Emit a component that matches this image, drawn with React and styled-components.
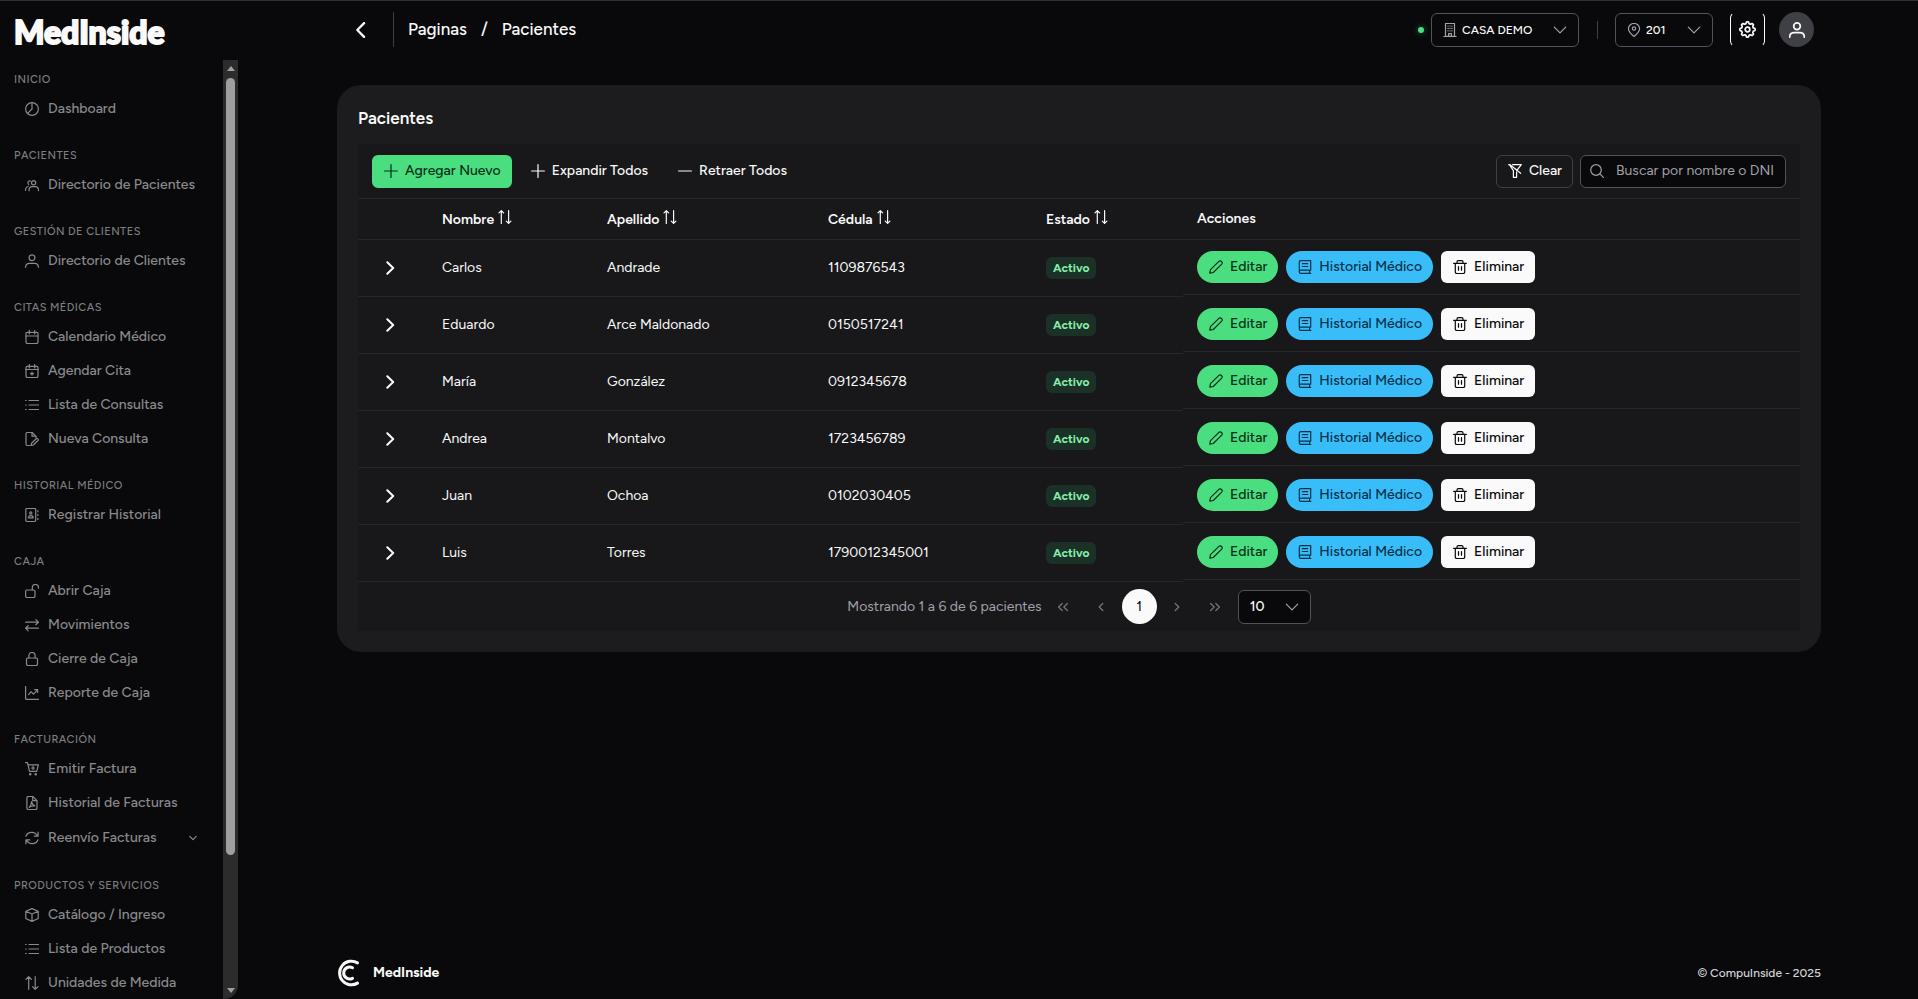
import { useState } from 'react';
import styled, { createGlobalStyle } from 'styled-components';

const GlobalStyle = createGlobalStyle`
  * {
    box-sizing: border-box;
  }
  body {
    margin: 0;
    background: #09090b;
    color: #fafafa;
    font-family: Figtree, Lato, 'Open Sans', sans-serif;
    font-size: 14px;
    line-height: 20px;
  }
  button, input, select {
    font: inherit;
    color: inherit;
  }
  a {
    color: inherit;
    text-decoration: none;
  }
`;

/* ---------- icons ---------- */

const Svg = styled.svg`
  flex: none;
  display: block;
  fill: none;
  stroke: currentColor;
  stroke-width: ${(p) => p.$weight || 1.2};
  stroke-linecap: round;
  stroke-linejoin: round;
`;

// eight rounded teeth around the centre
const gearPoints = Array.from({ length: 96 }, (_, i) => {
  const angle = (i / 96) * Math.PI * 2;
  const r = 5.6 + 0.7 * Math.tanh(2.5 * Math.cos(8 * angle));
  return `${(7 + r * Math.cos(angle)).toFixed(2)},${(7 + r * Math.sin(angle)).toFixed(2)}`;
}).join(' ');

const icons = {
  pie: <><circle cx='7' cy='7' r='6.4' /><path d='M7 .8V7L2.6 11.4' /></>,
  users: (
    <>
      <circle cx='8.6' cy='4.8' r='2.1' />
      <path d='M4 12.700c0-3 1.200-4 3-4h3.400c1.900 0 3.100 1 3.100 4' />
      <path d='M5.600 3.200C4.400 2.400 2.900 3.200 2.900 4.800c0 .8.400 1.400.9 1.800M.5 12.300c0-2.400.6-3.600 2.600-3.800' />
    </>
  ),
  user: <><circle cx='7' cy='3.700' r='2.900' /><path d='M.6 13.300c0-2.600 1.600-4 3.800-4h5.200c2.200 0 3.800 1.400 3.800 4' /></>,
  calendar: <><rect x='1' y='2.300' width='12' height='11.200' rx='1.400' /><path d='M1 6h12M4.300.5v3.400M9.700.5v3.400' /></>,
  calendarPlus: <><rect x='1' y='2.300' width='12' height='11.200' rx='1.400' /><path d='M1 5.500h12M4.300.5v3.400M9.700.5v3.400M7 8v3.200M5.400 9.600h3.200' /></>,
  list: <path d='M4 2.500h9.600M4 7h9.600M4 11.500h9.600M.6 2.500h.6M.6 7h.6M.6 11.500h.6' />,
  fileEdit: (
    <>
      <path d='M5 13.500H2.500c-1 0-1.500-.6-1.500-1.500V2C1 1.100 1.600.5 2.500.5h4.700L11 4.300v1.200' />
      <path d='M7 .6v3.600h3.800M6.600 11.200l4.600-4.500c1.100-.9 2.700.7 1.800 1.800l-4.600 4.500-2.300.5z' />
    </>
  ),
  addressBook: (
    <>
      <rect x='.8' y='.5' width='9.900' height='13' rx='1.200' />
      <circle cx='5.800' cy='5' r='1.100' />
      <path d='M3.400 9.800c0-1.600 1-2.200 2.400-2.200s2.400.6 2.400 2.200zM12.900 2.500v1.200M12.900 6.400v1.200M12.900 10.300v1.200' />
    </>
  ),
  lockOpen: <><rect x='.6' y='6' width='9.400' height='7.500' rx='1.400' /><path d='M7.300 6V3.400C7.300 1.600 8.600.5 10.400.5s3.100 1.100 3.100 2.900v.8' /></>,
  lock: <><rect x='1.500' y='6' width='11' height='7.500' rx='1.400' /><path d='M3.900 6V3.600C3.900 1.700 5.200.5 7 .5s3.100 1.200 3.100 3.100V6' /></>,
  transfer: <path d='M.6 4.200h12.800M10.800 1.600l2.600 2.600-2.600 2.500M13.400 10.200H.6M3.200 7.700L.6 10.200l2.600 2.600' />,
  chartLine: <path d='M.6.5v12c0 .6.300.9.900.9h12M3.600 8.600l2.500-3 2.400 2.500 4-4.300M9.600 3.600h3v3' />,
  cartPlus: (
    <>
      <path d='M.5.700h2l2 8.600h7.200l1.700-6.400H3.200M8 4.400v3.200M6.400 6h3.200' />
      <circle cx='5.200' cy='12.300' r='.7' />
      <circle cx='10.700' cy='12.300' r='.7' />
    </>
  ),
  filePdf: (
    <>
      <path d='M3.200.5h4.600L12 4.600v7.500c0 .9-.5 1.400-1.400 1.400H3.200c-.8 0-1.300-.5-1.300-1.400V1.900C1.900 1 2.400.5 3.200.5z' />
      <path d='M7.700.7v4h4M6.600 5.600c.6 2.600 1 3.500 3.200 4.300-2.300-.3-4 .1-5.600 1.500 1.700-1.400 2.200-3.200 2.400-5.800z' />
    </>
  ),
  sync: <path d='M1 5.200C1.900 2.700 4.200 1.400 6.800 1.400c2.700 0 4.500 1.300 5.800 3.500M13.100 1.200v3.900H9.300M13 8.800c-.9 2.500-3.200 3.800-5.800 3.800-2.700 0-4.500-1.300-5.800-3.500M.9 12.800V8.900h3.800' />,
  box: <path d='M7 .6l6.200 2.600v7.300L7 13.400.8 10.500V3.200zM.9 3.300L7 6l6.100-2.700M7 6v7.300' />,
  sort: <path d='M3.700 13.300V.7M.9 3.400L3.700.7l2.700 2.700M10.200.7v12.600M7.500 10.600l2.700 2.700 2.800-2.700' />,
  sortSmall: <path d='M3.300 13.400V.6M1 2.900L3.300.6l2.300 2.300M10.600.6v12.800M8.300 11.100l2.300 2.300 2.300-2.300' />,
  chevronDown: <path d='M1.300 4.200L7 9.900l5.700-5.700' />,
  chevronRight: <path d='M4.300 1.200L10.200 7l-5.900 5.800' />,
  chevronLeft: <path d='M9.700 1L3.800 7l5.900 6' />,
  angleRight: <path d='M5.200 3.500L8.800 7l-3.600 3.500' />,
  angleLeft: <path d='M8.800 3.500L5.200 7l3.600 3.500' />,
  anglesRight: <path d='M2.600 3.500L6.200 7l-3.600 3.500M7.800 3.500L11.400 7l-3.600 3.500' />,
  anglesLeft: <path d='M6.200 3.500L2.600 7l3.600 3.500M11.400 3.500L7.800 7l3.600 3.500' />,
  plus: <path d='M7 .6v12.800M.6 7h12.800' />,
  minus: <path d='M.6 7h12.800' />,
  building: <path d='M2.500.5h9v12.900h-9zM.9 13.500h12.200M4.900 3h.3M8.800 3h.3M6.900 3h.2M4.900 5.400h.3M8.800 5.400h.3M6.900 5.400h.2M4.900 7.800h.3M8.800 7.800h.3M6.900 7.800h.2M5.600 13.400v-2.700h2.800v2.700' />,
  marker: <><path d='M7 13.500C4.300 11.300 1.400 8.700 1.400 5.800 1.400 2.800 3.900.5 7 .5s5.600 2.300 5.600 5.300c0 2.900-2.900 5.500-5.600 7.700z' /><circle cx='7' cy='5.500' r='1.700' /></>,
  cog: <><polygon points={gearPoints} /><circle cx='7' cy='7' r='1.900' /></>,
  filterSlash: <path d='M4.600.7h8.700L8.700 6.600M1.400.7l4 5.900v6.700h3.200V8M.7.7h1.400l10.500 8.600' />,
  search: <><circle cx='6' cy='6' r='5.300' /><path d='M9.900 9.900l3.500 3.500' /></>,
  pencil: <path d='M.8 13.200l.7-3.500 8.400-8.400c1.800-1.500 4.300 1 2.800 2.800l-8.400 8.400z' />,
  book: <path d='M12.700 10.200H2.800c-2 0-2 3.200 0 3.200h9.900M2.800 10.200c-.9 0-1.500.6-1.500 1.500V2C1.300 1.100 1.900.6 2.800.6h9.900v9.600M11.600 10.200v3.200M4.300 3.700h5.400M4.300 6.500h5.400' />,
  trash: <path d='M.6 3.300h12.800M4 3.200V1.900C4 1.100 4.500.6 5.300.6h3.400c.8 0 1.300.5 1.300 1.300v1.300M2.300 3.400v8.700c0 .8.600 1.400 1.400 1.400h6.600c.8 0 1.400-.6 1.400-1.400V3.400M5.500 6.600v3.600M8.500 6.600v3.600' />,
};

const Icon = ({ name, size = 14, weight }) => (
  <Svg width={size} height={size} viewBox='0 0 14 14' $weight={weight} aria-hidden='true'>
    {icons[name]}
  </Svg>
);

/* ---------- sidebar ---------- */

const Layout = styled.div`
  display: flex;
  min-height: 100vh;
  border-top: 1px solid #303033;
`;

const Sidebar = styled.aside`
  flex: none;
  position: sticky;
  top: 0;
  width: 238px;
  height: calc(100vh - 1px);
  display: flex;
  flex-direction: column;
`;

const Logo = styled.a`
  flex: none;
  height: 59px;
  padding: 10px 14px 0;
  font-family: Lato, sans-serif;
  font-size: 32px;
  font-weight: 900;
  line-height: 42px;
  -webkit-text-stroke: 2px currentColor;
`;

const SidebarBody = styled.div`
  flex: 1;
  min-height: 0;
  display: flex;
  border-bottom-right-radius: 14px;
  overflow: hidden;
`;

const Nav = styled.nav`
  flex: 1;
  overflow: hidden;
  padding: 10px 26px 0 14px;
  color: #8a8a8d;
`;

const Section = styled.section`
  margin-bottom: 20px;
`;

const SectionTitle = styled.h2`
  margin: 0 0 2px;
  color: #7e7e81;
  font-size: 11px;
  font-weight: 500;
  line-height: 20px;
  letter-spacing: 0.04em;
  text-transform: uppercase;
`;

const NavItem = styled.a`
  display: flex;
  align-items: center;
  gap: 9px;
  height: ${(p) => (p.$expandable ? 36 : 34)}px;
  padding: 0 0 0 11px;
  font-weight: 500;

  span {
    flex: 1;
    white-space: nowrap;
  }
`;

const ScrollBar = styled.div`
  width: 15px;
  background: #2c2c2c;
  color: #9f9f9f;
  display: flex;
  flex-direction: column;
  align-items: center;
  padding: 6px 0;
`;

const Arrow = styled.i`
  flex: none;
  border: 4px solid transparent;
  border-top-width: ${(p) => (p.$down ? '5px' : 0)};
  border-bottom-width: ${(p) => (p.$down ? 0 : '5px')};
  border-top-color: ${(p) => (p.$down ? 'currentColor' : 'transparent')};
  border-bottom-color: ${(p) => (p.$down ? 'transparent' : 'currentColor')};
`;

const Track = styled.div`
  flex: 1;
  display: flex;
  flex-direction: column;
  padding: 7px 0;
`;

const Thumb = styled.div`
  width: 9px;
  height: 86%;
  border-radius: 5px;
  background: currentColor;
`;

const sections = [
  { title: 'Inicio', items: [['pie', 'Dashboard']] },
  { title: 'Pacientes', items: [['users', 'Directorio de Pacientes']] },
  { title: 'Gestión de Clientes', items: [['user', 'Directorio de Clientes']] },
  {
    title: 'Citas Médicas',
    items: [
      ['calendar', 'Calendario Médico'],
      ['calendarPlus', 'Agendar Cita'],
      ['list', 'Lista de Consultas'],
      ['fileEdit', 'Nueva Consulta'],
    ],
  },
  { title: 'Historial Médico', items: [['addressBook', 'Registrar Historial']] },
  {
    title: 'Caja',
    items: [
      ['lockOpen', 'Abrir Caja'],
      ['transfer', 'Movimientos'],
      ['lock', 'Cierre de Caja'],
      ['chartLine', 'Reporte de Caja'],
    ],
  },
  {
    title: 'Facturación',
    items: [
      ['cartPlus', 'Emitir Factura'],
      ['filePdf', 'Historial de Facturas'],
      ['sync', 'Reenvío Facturas', true],
    ],
  },
  {
    title: 'Productos y Servicios',
    items: [
      ['box', 'Catálogo / Ingreso'],
      ['list', 'Lista de Productos'],
      ['sort', 'Unidades de Medida'],
    ],
  },
];

const AppSidebar = () => (
  <Sidebar>
    <Logo href='#inicio'>MedInside</Logo>
    <SidebarBody>
      <Nav>
        {sections.map((section) => (
          <Section key={section.title}>
            <SectionTitle>{section.title}</SectionTitle>
            {section.items.map(([icon, label, expandable]) => (
              <NavItem key={label} href='#' $expandable={expandable}>
                <Icon name={icon} />
                <span>{label}</span>
                {expandable && <Icon name='chevronDown' size={8} weight={2} />}
              </NavItem>
            ))}
          </Section>
        ))}
      </Nav>
      <ScrollBar aria-hidden='true'>
        <Arrow />
        <Track>
          <Thumb />
        </Track>
        <Arrow $down />
      </ScrollBar>
    </SidebarBody>
  </Sidebar>
);

/* ---------- top bar ---------- */

const Main = styled.main`
  flex: 1;
  min-width: 0;
  display: flex;
  flex-direction: column;
  padding: 0 97px 12px 99px;
`;

const TopBar = styled.header`
  display: flex;
  align-items: center;
  height: 84px;
  padding: 11px 7px 38px 0;
`;

const BackButton = styled.button`
  display: flex;
  align-items: center;
  justify-content: center;
  width: 48px;
  height: 35px;
  padding: 0;
  border: 0;
  background: none;
`;

const Breadcrumb = styled.nav`
  display: flex;
  gap: 14px;
  align-items: center;
  height: 35px;
  margin-left: 8px;
  padding: 0 0 2px 14px;
  border-left: 1px solid #3f3f46;
  font-size: 17px;
  font-weight: 500;
`;

const TopTools = styled.div`
  display: flex;
  align-items: center;
  margin-left: auto;
`;

const StatusDot = styled.span`
  width: 6px;
  height: 6px;
  margin-right: 7px;
  border-radius: 50%;
  background: #4ade80;
  box-shadow: 0 0 6px rgba(74, 222, 128, 0.5);
`;

const SelectBox = styled.label`
  display: flex;
  align-items: center;
  gap: ${(p) => p.$gap || 0}px;
  width: ${(p) => p.$width}px;
  height: 34px;
  padding: 0 ${(p) => p.$pad || 11}px;
  border: 1px solid #52525b;
  border-radius: 6px;
  background: #09090b;
  color: #a1a1aa;

  select {
    flex: 1;
    min-width: 0;
    padding: 0;
    border: 0;
    outline: 0;
    appearance: none;
    background: transparent;
    color: #fafafa;
    font-size: ${(p) => p.$font || 12}px;
    font-weight: 500;
  }
`;

const Separator = styled.span`
  width: 1px;
  height: 18px;
  margin: 0 17px 0 18px;
  background: #3f3f46;
`;

const GearButton = styled.button`
  display: flex;
  align-items: center;
  justify-content: center;
  width: 35px;
  height: 35px;
  margin: 0 14px 0 17px;
  padding: 0;
  border: 1px solid transparent;
  border-left-color: #fff;
  border-right-color: #fff;
  border-radius: 6px;
  background: none;
`;

const Avatar = styled.button`
  display: flex;
  align-items: center;
  justify-content: center;
  width: 35px;
  height: 35px;
  padding: 0;
  border: 0;
  border-radius: 50%;
  background: #3f3f46;
`;

const Header = () => (
  <TopBar>
    <BackButton aria-label='Volver'>
      <Icon name='chevronLeft' size={16} weight={2} />
    </BackButton>
    <Breadcrumb aria-label='Ruta'>
      <a href='#paginas'>Paginas</a>
      <span>/</span>
      <a href='#pacientes'>Pacientes</a>
    </Breadcrumb>
    <TopTools>
      <StatusDot />
      <SelectBox $width={148} $gap={5}>
        <Icon name='building' />
        <select aria-label='Empresa'>
          <option>CASA DEMO</option>
        </select>
        <Icon name='chevronDown' />
      </SelectBox>
      <Separator />
      <SelectBox $width={98} $gap={5}>
        <Icon name='marker' />
        <select aria-label='Sucursal'>
          <option>201</option>
        </select>
        <Icon name='chevronDown' />
      </SelectBox>
      <GearButton aria-label='Configuración'>
        <Icon name='cog' size={17} weight={1.4} />
      </GearButton>
      <Avatar aria-label='Perfil'>
        <Icon name='user' size={16} weight={1.5} />
      </Avatar>
    </TopTools>
  </TopBar>
);

/* ---------- patients table ---------- */

const Card = styled.section`
  padding: 21px;
  border-radius: 24px;
  background: #1c1c1e;
`;

const CardTitle = styled.h1`
  margin: 0 0 14px;
  font-size: 17px;
  font-weight: 600;
  line-height: 24px;
`;

const Panel = styled.div`
  background: #18181b;
`;

const Toolbar = styled.div`
  display: flex;
  align-items: center;
  height: 55px;
  padding: 0 14px;
  border-bottom: 1px solid #27272a;
`;

const ToolbarEnd = styled.div`
  display: flex;
  gap: 7px;
  margin-left: auto;
`;

const tones = {
  green: 'background: #4ade80; color: #052e16;',
  blue: 'background: #38bdf8; color: #082f49;',
  light: 'background: #fafafa; color: #09090b;',
  outlined: 'background: transparent; color: #fafafa; border-color: #3f3f46;',
  text: 'background: transparent; color: #fafafa;',
};

const Button = styled.button`
  display: inline-flex;
  align-items: center;
  gap: 7px;
  height: ${(p) => (p.$small ? 32 : 33)}px;
  padding: 0 10px 0 11px;
  border: 1px solid transparent;
  border-radius: ${(p) => (p.$pill ? 16 : 6)}px;
  font-weight: 500;
  white-space: nowrap;
  ${(p) => tones[p.$tone]}
`;

const ToolButton = styled(Button)`
  margin-right: 7px;
`;

const SearchBox = styled.label`
  display: flex;
  align-items: center;
  gap: 12px;
  width: 206px;
  height: 33px;
  padding: 0 9px;
  border: 1px solid #52525b;
  border-radius: 6px;
  background: #09090b;
  color: #a1a1aa;

  input {
    flex: 1;
    min-width: 0;
    padding: 0;
    border: 0;
    outline: 0;
    background: transparent;
  }
  input::placeholder {
    color: #a1a1aa;
    opacity: 1;
  }
`;

const Table = styled.table`
  width: 100%;
  table-layout: fixed;
  border-collapse: separate;
  border-spacing: 0;
`;

const Col = styled.col`
  width: ${(p) => (p.$width ? `${p.$width}px` : 'auto')};
`;

const Th = styled.th`
  height: 41px;
  padding: 0 14px;
  border-bottom: 1px solid #27272a;
  font-weight: 600;
  text-align: left;
`;

const SortButton = styled.button`
  display: flex;
  align-items: flex-start;
  gap: 4px;
  padding: 2px 0 0;
  border: 0;
  background: none;
  font-weight: 600;
`;

const Td = styled.td`
  height: 57px;
  padding: 0 14px;
  border-bottom: 1px solid #27272a;
`;

const ActionsTd = styled.td`
  padding: 0;
  vertical-align: top;
`;

const Actions = styled.div`
  display: flex;
  gap: 8px;
  padding: 11px 14px;
  border-bottom: 1px solid #27272a;
`;

const Toggle = styled.button`
  display: flex;
  align-items: center;
  justify-content: center;
  width: 36px;
  height: 36px;
  padding: 0;
  border: 0;
  background: none;
`;

const Tag = styled.span`
  display: inline-block;
  vertical-align: middle;
  padding: 1px 7px;
  border-radius: 6px;
  background: #1b3128;
  color: #86efac;
  font-size: 12px;
  font-weight: 700;
`;

const Paginator = styled.div`
  display: flex;
  align-items: center;
  justify-content: center;
  gap: 4px;
  height: 49px;
  color: #a1a1aa;
`;

const PageList = styled.div`
  display: flex;
  gap: 3px;
  margin-right: 1px;
`;

const PageButton = styled.button`
  display: flex;
  align-items: center;
  justify-content: center;
  width: 35px;
  height: 35px;
  padding: 0;
  border: 0;
  border-radius: 50%;
  background: ${(p) => (p.$active ? '#fafafa' : 'transparent')};
  color: ${(p) => (p.$active ? '#09090b' : '#77777c')};
`;

const columns = [
  ['Nombre', 165],
  ['Apellido', 221],
  ['Cédula', 218],
  ['Estado', 151],
];

const patients = [
  ['Carlos', 'Andrade', '1109876543'],
  ['Eduardo', 'Arce Maldonado', '0150517241'],
  ['María', 'González', '0912345678'],
  ['Andrea', 'Montalvo', '1723456789'],
  ['Juan', 'Ochoa', '0102030405'],
  ['Luis', 'Torres', '1790012345001'],
];

const PatientRow = ({ patient }) => {
  const [name, lastName, idNumber] = patient;
  return (
    <tr>
      <Td>
        <Toggle aria-label={`Expandir ${name}`}>
          <Icon name='chevronRight' weight={2} />
        </Toggle>
      </Td>
      <Td>{name}</Td>
      <Td>{lastName}</Td>
      <Td>{idNumber}</Td>
      <Td>
        <Tag>Activo</Tag>
      </Td>
      <ActionsTd>
        <Actions>
          <Button $tone='green' $pill $small>
            <Icon name='pencil' />
            Editar
          </Button>
          <Button $tone='blue' $pill $small>
            <Icon name='book' />
            Historial Médico
          </Button>
          <Button $tone='light' $small>
            <Icon name='trash' />
            Eliminar
          </Button>
        </Actions>
      </ActionsTd>
    </tr>
  );
};

const Patients = () => {
  const [query, setQuery] = useState('');
  const rows = patients.filter((p) => p.join(' ').toLowerCase().includes(query.toLowerCase()));

  return (
    <Card>
      <CardTitle>Pacientes</CardTitle>
      <Panel>
        <Toolbar>
          <ToolButton $tone='green'>
            <Icon name='plus' />
            Agregar Nuevo
          </ToolButton>
          <ToolButton $tone='text'>
            <Icon name='plus' />
            Expandir Todos
          </ToolButton>
          <ToolButton $tone='text'>
            <Icon name='minus' />
            Retraer Todos
          </ToolButton>
          <ToolbarEnd>
            <Button $tone='outlined' onClick={() => setQuery('')}>
              <Icon name='filterSlash' />
              Clear
            </Button>
            <SearchBox>
              <Icon name='search' />
              <input
                type='text'
                aria-label='Buscar pacientes'
                placeholder='Buscar por nombre o DNI'
                value={query}
                onChange={(e) => setQuery(e.target.value)}
              />
            </SearchBox>
          </ToolbarEnd>
        </Toolbar>
        <Table>
          <colgroup>
            <Col $width={70} />
            {columns.map(([label, width]) => (
              <Col key={label} $width={width} />
            ))}
            <Col />
          </colgroup>
          <thead>
            <tr>
              <Th />
              {columns.map(([label]) => (
                <Th key={label}>
                  <SortButton>
                    {label}
                    <Icon name='sortSmall' />
                  </SortButton>
                </Th>
              ))}
              <Th>Acciones</Th>
            </tr>
          </thead>
          <tbody>
            {rows.map((patient) => (
              <PatientRow key={patient[2]} patient={patient} />
            ))}
          </tbody>
        </Table>
        <Paginator>
          <span>Mostrando 1 a 6 de 6 pacientes</span>
          <PageList>
            <PageButton aria-label='Primera página'><Icon name='anglesLeft' /></PageButton>
            <PageButton aria-label='Página anterior'><Icon name='angleLeft' /></PageButton>
            <PageButton $active>1</PageButton>
            <PageButton aria-label='Página siguiente'><Icon name='angleRight' /></PageButton>
            <PageButton aria-label='Última página'><Icon name='anglesRight' /></PageButton>
          </PageList>
          <SelectBox $width={73} $font={14}>
            <select aria-label='Filas por página'>
              <option>10</option>
            </select>
            <Icon name='chevronDown' />
          </SelectBox>
        </Paginator>
      </Panel>
    </Card>
  );
};

/* ---------- footer ---------- */

const FooterBar = styled.footer`
  display: flex;
  align-items: center;
  margin-top: auto;
`;

const FooterBrand = styled.a`
  display: flex;
  align-items: center;
  gap: 12px;
  font-weight: 700;
`;

const Copyright = styled.small`
  margin-left: auto;
  color: #d4d4d8;
  font-size: 12px;
  font-weight: 500;
`;

const Footer = () => (
  <FooterBar>
    <FooterBrand href='#inicio'>
      <Svg width='24' height='28' viewBox='0 0 24 28' $weight={3} aria-hidden='true'>
        <path d='M20.500 3.900A11.800 11.800 0 1 0 20.500 24.100' />
        <path d='M15.500 8.700A6 6 0 1 0 15.500 19.300' />
      </Svg>
      MedInside
    </FooterBrand>
    <Copyright>© CompuInside - 2025</Copyright>
  </FooterBar>
);

const App = () => (
  <>
    <GlobalStyle />
    <Layout>
      <AppSidebar />
      <Main>
        <Header />
        <Patients />
        <Footer />
      </Main>
    </Layout>
  </>
);

export default App;
